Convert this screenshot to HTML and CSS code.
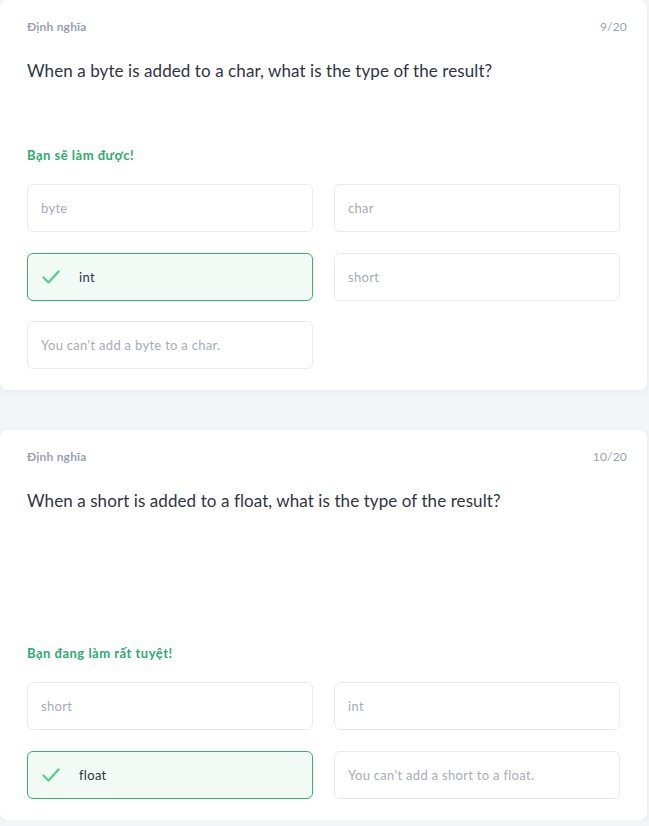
FILE: index.html
```html
<!DOCTYPE html>
<html lang="vi">
<head>
<meta charset="utf-8">
<title>Quiz</title>
<link rel="stylesheet" href="styles.css">
</head>
<body>
<div class="list">
  <section class="card">
    <div class="card-head">
      <span class="tag">Định nghĩa</span>
      <span class="count">9/20</span>
    </div>
    <p class="question">When a byte is added to a char, what is the type of the result?</p>
    <p class="cheer">Bạn sẽ làm được!</p>
    <div class="options">
      <div class="option">byte</div>
      <div class="option">char</div>
      <div class="option correct">
        <svg class="check" width="18" height="14" viewBox="0 0 18 14"><path d="M1.5 7.5 L6.5 12.5 L16.5 1.5" fill="none" stroke="#5ccb92" stroke-width="2.4" stroke-linecap="round" stroke-linejoin="round"/></svg>
        <span>int</span>
      </div>
      <div class="option">short</div>
      <div class="option">You can't add a byte to a char.</div>
    </div>
  </section>
  <section class="card">
    <div class="card-head">
      <span class="tag">Định nghĩa</span>
      <span class="count">10/20</span>
    </div>
    <p class="question tall">When a short is added to a float, what is the type of the result?</p>
    <p class="cheer">Bạn đang làm rất tuyệt!</p>
    <div class="options">
      <div class="option">short</div>
      <div class="option">int</div>
      <div class="option correct">
        <svg class="check" width="18" height="14" viewBox="0 0 18 14"><path d="M1.5 7.5 L6.5 12.5 L16.5 1.5" fill="none" stroke="#5ccb92" stroke-width="2.4" stroke-linecap="round" stroke-linejoin="round"/></svg>
        <span>float</span>
      </div>
      <div class="option">You can't add a short to a float.</div>
    </div>
  </section>
</div>
</body>
</html>
```
FILE: styles.css
```css
html, body {
  margin: 0;
  padding: 0;
}
body {
  background: #f4f5f9;
  font-family: Lato, "Open Sans", "Liberation Sans", sans-serif;
  color: #2f3444;
}
.list {
  display: flex;
  flex-direction: column;
  gap: 40px;
  width: 647px;
}
.card {
  display: flex;
  flex-direction: column;
  background: #ffffff;
  border-radius: 8px;
  box-shadow: 0 2px 10px rgba(40, 50, 90, 0.06);
  padding: 19px 27px 21px 27px;
  box-sizing: border-box;
}
.card-head {
  display: flex;
  justify-content: space-between;
  align-items: center;
  height: 16px;
  margin-right: -7px;
  font-size: 12px;
  line-height: 16px;
  letter-spacing: 0.2px;
}
.tag {
  font-weight: 700;
  color: #9a9fb3;
}
.count {
  color: #9a9fb3;
}
.question {
  margin: 24px 0 0 0;
  font-size: 17px;
  line-height: 24px;
  letter-spacing: 0.08px;
  color: #2f3444;
}
.question.tall {
  margin-bottom: 68px;
}
.cheer {
  margin: 64px 0 0 0;
  font-size: 13px;
  line-height: 16px;
  letter-spacing: 0.5px;
  font-weight: 700;
  color: #2eaa6f;
}
.options {
  margin-top: 21px;
  display: grid;
  grid-template-columns: 286px 286px;
  grid-auto-rows: 48px;
  column-gap: 21px;
  row-gap: 20.5px;
}
.option {
  display: flex;
  align-items: center;
  box-sizing: border-box;
  border: 1px solid #e9eaf0;
  border-radius: 6px;
  padding: 0 13px;
  font-size: 13px;
  letter-spacing: 0.3px;
  color: #a8abb8;
  background: #ffffff;
}
.option.correct {
  background: #f1faf4;
  border-color: #35b270;
  color: #2f3444;
  padding-left: 14px;
}
.check {
  margin-right: 19px;
  flex: none;
}
```
